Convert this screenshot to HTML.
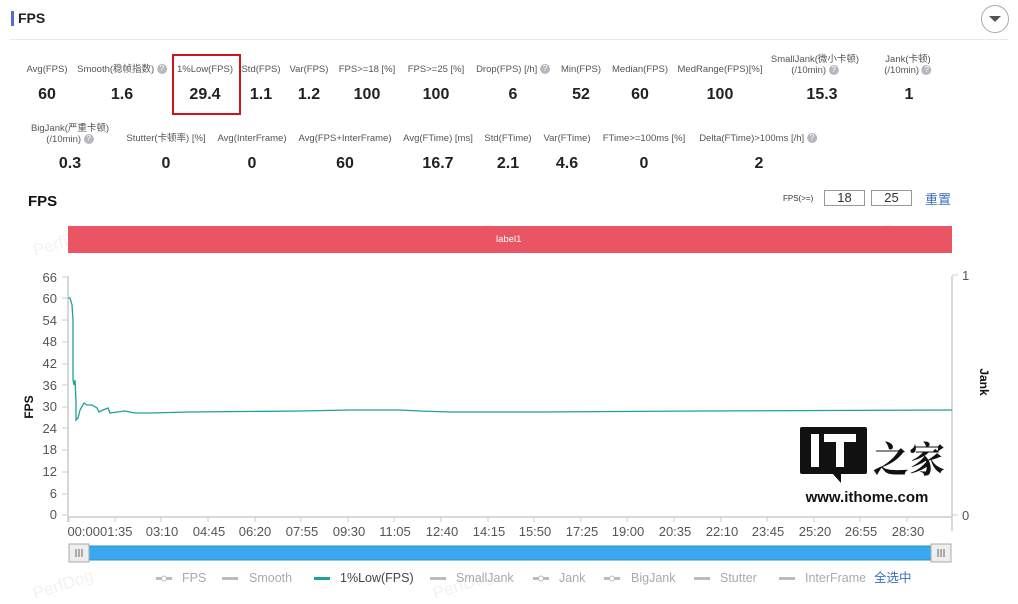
<!DOCTYPE html>
<html><head><meta charset="utf-8"><style>
body{margin:0;width:1018px;height:593px;background:#fff;font-family:"Liberation Sans","Noto Sans CJK SC",sans-serif;position:relative;overflow:hidden;color:#333}
.a{position:absolute}
.l{position:absolute;font-size:9.5px;color:#555;text-align:center;white-space:nowrap;transform:translateX(-50%);line-height:11px}
.v{position:absolute;font-size:16px;font-weight:bold;color:#222;transform:translateX(-50%);white-space:nowrap}
.q{display:inline-block;width:10px;height:10px;border-radius:50%;background:#b5b8c0;color:#fff;font-size:8px;line-height:10px;text-align:center;vertical-align:middle}
.wm{position:absolute;color:#f2f2f2;font-size:17px;transform:rotate(-18deg)}
</style></head><body>
<div class="a" style="left:11px;top:11px;width:3px;height:15px;background:#4c6fd6"></div>
<div class="a" style="left:18px;top:10px;font-size:14px;font-weight:bold;color:#222">FPS</div>
<div class="a" style="left:10px;top:39px;width:998px;height:1px;background:#e6e9ee"></div>
<div class="a" style="left:981px;top:5px;width:26px;height:26px;border:1px solid #aaa;border-radius:50%"></div>
<div class="a" style="left:989px;top:16px;width:0;height:0;border-left:6px solid transparent;border-right:6px solid transparent;border-top:6px solid #555"></div>

<div class="l" style="left:47px;top:64px">Avg(FPS)</div><div class="v" style="left:47px;top:86px">60</div>
<div class="l" style="left:122px;top:64px">Smooth(稳帧指数) <span class="q">?</span></div><div class="v" style="left:122px;top:86px">1.6</div>
<div class="l" style="left:205px;top:64px">1%Low(FPS)</div><div class="v" style="left:205px;top:86px">29.4</div>
<div class="l" style="left:261px;top:64px">Std(FPS)</div><div class="v" style="left:261px;top:86px">1.1</div>
<div class="l" style="left:309px;top:64px">Var(FPS)</div><div class="v" style="left:309px;top:86px">1.2</div>
<div class="l" style="left:367px;top:64px">FPS>=18 [%]</div><div class="v" style="left:367px;top:86px">100</div>
<div class="l" style="left:436px;top:64px">FPS>=25 [%]</div><div class="v" style="left:436px;top:86px">100</div>
<div class="l" style="left:513px;top:64px">Drop(FPS) [/h] <span class="q">?</span></div><div class="v" style="left:513px;top:86px">6</div>
<div class="l" style="left:581px;top:64px">Min(FPS)</div><div class="v" style="left:581px;top:86px">52</div>
<div class="l" style="left:640px;top:64px">Median(FPS)</div><div class="v" style="left:640px;top:86px">60</div>
<div class="l" style="left:720px;top:64px">MedRange(FPS)[%]</div><div class="v" style="left:720px;top:86px">100</div>
<div class="l" style="left:815px;top:54px">SmallJank(微小卡顿)<br>(/10min) <span class="q">?</span></div><div class="v" style="left:822px;top:86px">15.3</div>
<div class="l" style="left:908px;top:54px">Jank(卡顿)<br>(/10min) <span class="q">?</span></div><div class="v" style="left:909px;top:86px">1</div>
<div class="a" style="left:172px;top:54px;width:65px;height:57px;border:2px solid #d0141c"></div>

<div class="l" style="left:70px;top:123px">BigJank(严重卡顿)<br>(/10min) <span class="q">?</span></div><div class="v" style="left:70px;top:155px">0.3</div>
<div class="l" style="left:166px;top:133px">Stutter(卡顿率) [%]</div><div class="v" style="left:166px;top:155px">0</div>
<div class="l" style="left:252px;top:133px">Avg(InterFrame)</div><div class="v" style="left:252px;top:155px">0</div>
<div class="l" style="left:345px;top:133px">Avg(FPS+InterFrame)</div><div class="v" style="left:345px;top:155px">60</div>
<div class="l" style="left:438px;top:133px">Avg(FTime) [ms]</div><div class="v" style="left:438px;top:155px">16.7</div>
<div class="l" style="left:508px;top:133px">Std(FTime)</div><div class="v" style="left:508px;top:155px">2.1</div>
<div class="l" style="left:567px;top:133px">Var(FTime)</div><div class="v" style="left:567px;top:155px">4.6</div>
<div class="l" style="left:644px;top:133px">FTime>=100ms [%]</div><div class="v" style="left:644px;top:155px">0</div>
<div class="l" style="left:758px;top:133px">Delta(FTime)>100ms [/h] <span class="q">?</span></div><div class="v" style="left:759px;top:155px">2</div>

<div class="a" style="left:28px;top:193px;font-size:15px;font-weight:bold;color:#111">FPS</div>
<div class="a" style="left:783px;top:194px;font-size:8px;color:#333">FPS(>=)</div>
<div class="a" style="left:824px;top:190px;width:39px;height:14px;border:1px solid #999;font-size:13px;text-align:center;line-height:14px">18</div>
<div class="a" style="left:871px;top:190px;width:39px;height:14px;border:1px solid #999;font-size:13px;text-align:center;line-height:14px">25</div>
<div class="a" style="left:925px;top:189px;font-size:13px;color:#3a6fc0">重置</div>

<div class="wm" style="left:32px;top:232px">PerfDog</div>
<div class="wm" style="left:432px;top:227px">PerfDog</div>
<div class="wm" style="left:832px;top:227px">PerfDog</div>
<div class="wm" style="left:32px;top:575px">PerfDog</div>
<div class="wm" style="left:432px;top:575px">PerfDog</div>
<div class="a" style="left:68px;top:226px;width:884px;height:27px;background:#e95563"></div>
<div class="a" style="left:496px;top:234px;font-size:9.5px;color:#fff">label1</div>

<svg class="a" style="left:0;top:255px" width="1018" height="338" viewBox="0 255 1018 338" font-family="Liberation Sans,sans-serif">
<g stroke="#ccc" stroke-width="1.5" fill="none">
<line x1="68" y1="276" x2="68" y2="522"/><line x1="952" y1="276" x2="952" y2="531"/>
<line x1="68" y1="517" x2="952" y2="517"/>
</g>
<g fill="#555" font-size="13" text-anchor="end">
<text x="57" y="282">66</text><text x="57" y="303">60</text><text x="57" y="325">54</text><text x="57" y="346">48</text><text x="57" y="368">42</text><text x="57" y="390">36</text><text x="57" y="411">30</text><text x="57" y="433">24</text><text x="57" y="454">18</text><text x="57" y="476">12</text><text x="57" y="498">6</text><text x="57" y="519">0</text>
</g>
<g stroke="#ccc"><path d="M62 277H68M62 298H68M62 320H68M62 342H68M62 364H68M62 385H68M62 407H68M62 428H68M62 450H68M62 472H68M62 494H68M62 515H68M952 275H958M952 515H958"/></g>
<text x="962" y="280" font-size="13" fill="#555">1</text><text x="962" y="520" font-size="13" fill="#555">0</text>
<text transform="translate(33,407) rotate(-90)" font-size="12" font-weight="bold" text-anchor="middle" fill="#111">FPS</text>
<text transform="translate(980,382) rotate(90)" font-size="12" font-weight="bold" text-anchor="middle" fill="#111">Jank</text>
<g stroke="#ccc"><path d="M69 517v5M115 517v5M161 517v5M208 517v5M255 517v5M301 517v5M348 517v5M394 517v5M441 517v5M488 517v5M534 517v5M581 517v5M627 517v5M674 517v5M721 517v5M767 517v5M814 517v5M860 517v5M907 517v5"/></g>
<g fill="#555" font-size="13" text-anchor="middle">
<text x="100" y="536">00:0001:35</text><text x="162" y="536">03:10</text><text x="209" y="536">04:45</text><text x="255" y="536">06:20</text><text x="302" y="536">07:55</text><text x="349" y="536">09:30</text><text x="395" y="536">11:05</text><text x="442" y="536">12:40</text><text x="489" y="536">14:15</text><text x="535" y="536">15:50</text><text x="582" y="536">17:25</text><text x="628" y="536">19:00</text><text x="675" y="536">20:35</text><text x="722" y="536">22:10</text><text x="768" y="536">23:45</text><text x="815" y="536">25:20</text><text x="861" y="536">26:55</text><text x="908" y="536">28:30</text>
</g>
<polyline fill="none" stroke="#20a09a" stroke-width="1.3" points="68,298 70,298 72,305 73,320 73,380 74,385 75,380 76,402 76,420 78,418 80,410 84,403 87,405 92,405 97,408 99,412 103,410 108,408 110,413 117,412 125,411 135,413 150,413 190,412 300,411 350,410 400,410 420,411 450,412 540,412 700,411 952,410"/>
<rect x="800" y="427" width="67" height="47" rx="2" fill="#111"/>
<path d="M832 473 L841 483 L841 473Z" fill="#111"/>
<rect x="811" y="434" width="8" height="33" fill="#fff"/>
<rect x="824" y="434" width="32" height="8" fill="#fff"/><rect x="836" y="434" width="8" height="33" fill="#fff"/>
<text x="873" y="472" font-size="36" font-weight="bold" font-family="Noto Serif CJK SC,serif" fill="#111">之家</text>
<text x="867" y="502" font-size="15" font-weight="bold" text-anchor="middle" fill="#111">www.ithome.com</text>
<rect x="69" y="546" width="882" height="14" fill="#3aa8ef" stroke="#2c8fd0"/>
<rect x="69" y="544" width="20" height="18" fill="#eee" stroke="#aaa"/><rect x="931" y="544" width="20" height="18" fill="#eee" stroke="#aaa"/>
<path d="M76 549v8M79 549v8M82 549v8M938 549v8M941 549v8M944 549v8" stroke="#666"/>
<g font-size="12.5" fill="#aaa">
<rect x="156" y="577" width="16" height="3" fill="#bbb"/><circle cx="164" cy="578.5" r="2.5" fill="#fff" stroke="#bbb"/><text x="182" y="582">FPS</text>
<rect x="222" y="577" width="16" height="3" fill="#bbb"/><text x="249" y="582">Smooth</text>
<rect x="314" y="577" width="16" height="3" fill="#20a09a"/><text x="340" y="582" fill="#444">1%Low(FPS)</text>
<rect x="430" y="577" width="16" height="3" fill="#bbb"/><text x="456" y="582">SmallJank</text>
<rect x="533" y="577" width="16" height="3" fill="#bbb"/><circle cx="541" cy="578.5" r="2.5" fill="#fff" stroke="#bbb"/><text x="559" y="582">Jank</text>
<rect x="604" y="577" width="16" height="3" fill="#bbb"/><circle cx="612" cy="578.5" r="2.5" fill="#fff" stroke="#bbb"/><text x="631" y="582">BigJank</text>
<rect x="694" y="577" width="16" height="3" fill="#bbb"/><text x="720" y="582">Stutter</text>
<rect x="779" y="577" width="16" height="3" fill="#bbb"/><text x="805" y="582">InterFrame</text>
<text x="874" y="582" fill="#3a6fc0">全选中</text>
</g>
</svg>
</body></html>
